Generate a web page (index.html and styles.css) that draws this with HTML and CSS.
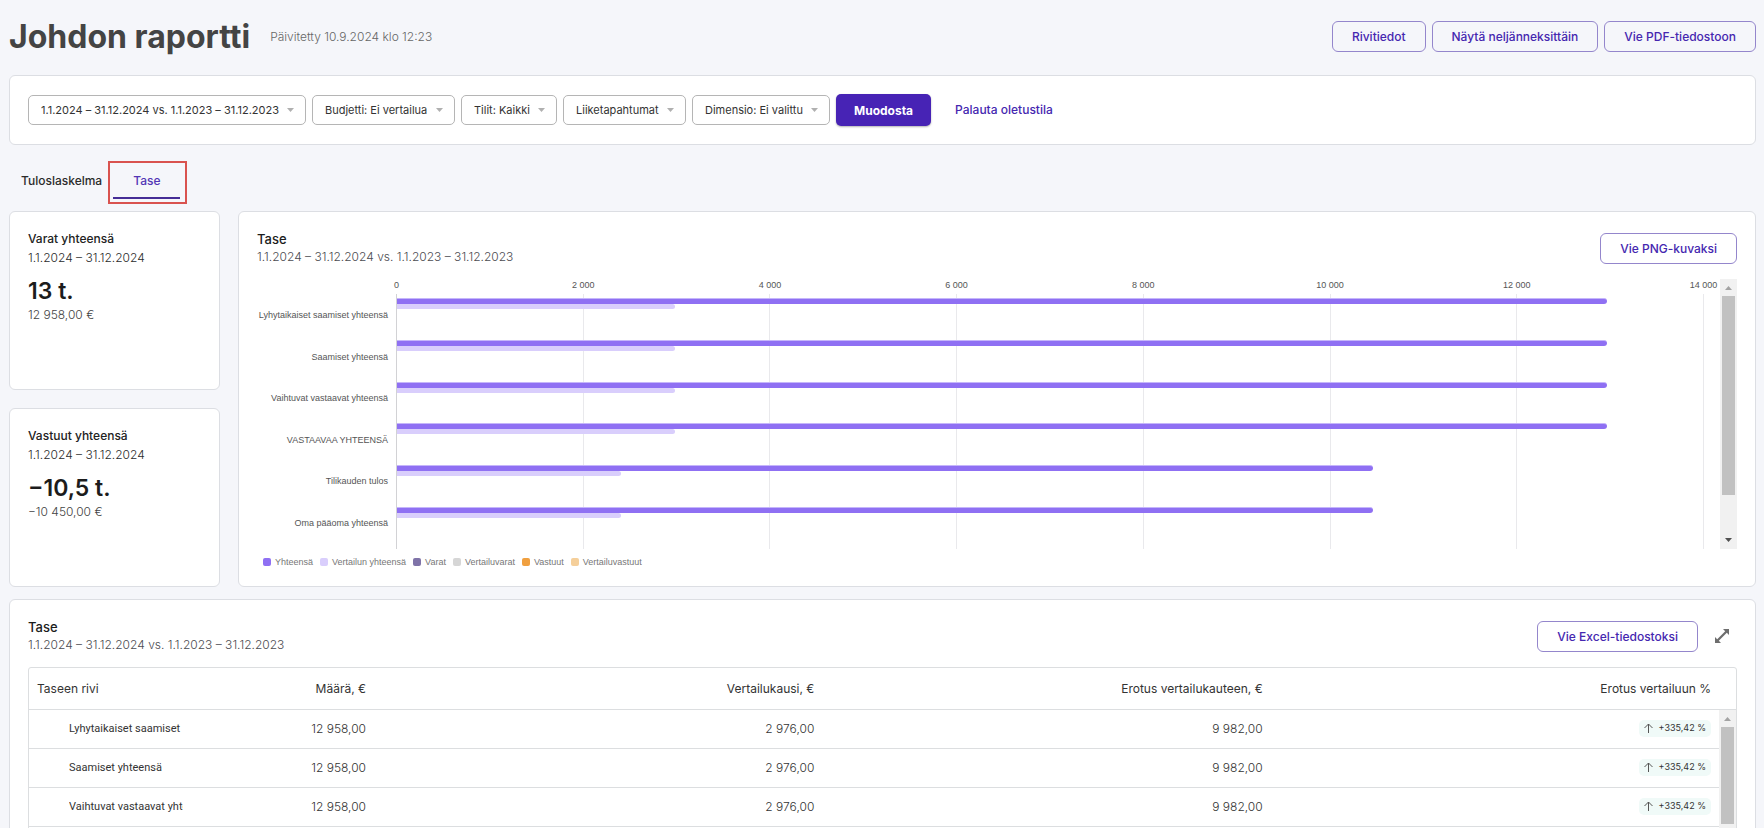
FILE: index.html
```html
<!DOCTYPE html>
<html lang="fi">
<head>
  <meta charset="UTF-8" />
  <title>Johdon raportti</title>
  <link rel="stylesheet" href="styles.css">
</head>
<body>

<header class="page-header">
  <h1>Johdon raportti</h1>
  <span class="updated">Päivitetty 10.9.2024 klo 12:23</span>
  <div class="actions">
    <button class="btn">Rivitiedot</button>
    <button class="btn">Näytä neljänneksittäin</button>
    <button class="btn">Vie PDF-tiedostoon</button>
  </div>
</header>

<form class="card filters" onsubmit="return false">
  <select class="filter" aria-label="Kausi"><option>1.1.2024 – 31.12.2024 vs. 1.1.2023 – 31.12.2023</option></select>
  <select class="filter" aria-label="Budjetti"><option>Budjetti: Ei vertailua</option></select>
  <select class="filter" aria-label="Tilit"><option>Tilit: Kaikki</option></select>
  <select class="filter" aria-label="Liiketapahtumat"><option>Liiketapahtumat</option></select>
  <select class="filter" aria-label="Dimensio"><option>Dimensio: Ei valittu</option></select>
  <button class="btn-primary">Muodosta</button>
  <a class="reset" href="#">Palauta oletustila</a>
</form>

<nav class="tabs">
  <a class="tab" href="#">Tuloslaskelma</a>
  <div class="marked"><a class="tab active" href="#">Tase</a></div>
</nav>

<div class="overview">
  <div class="summaries">
    <section class="card summary">
      <h3>Varat yhteensä</h3>
      <p class="period">1.1.2024 – 31.12.2024</p>
      <p class="amount">13 t.</p>
      <p class="exact">12 958,00 €</p>
    </section>
    <section class="card summary">
      <h3>Vastuut yhteensä</h3>
      <p class="period">1.1.2024 – 31.12.2024</p>
      <p class="amount">−10,5 t.</p>
      <p class="exact">−10 450,00 €</p>
    </section>
  </div>

  <section class="card chart-card">
    <div class="card-head">
      <div>
        <h2>Tase</h2>
        <p class="subtitle">1.1.2024 – 31.12.2024 vs. 1.1.2023 – 31.12.2023</p>
      </div>
      <button class="btn">Vie PNG-kuvaksi</button>
    </div>
    <div class="chart-wrap">
      <div class="chart">
        <div class="ticks">
          <span>0</span><span>2 000</span><span>4 000</span><span>6 000</span><span>8 000</span><span>10 000</span><span>12 000</span><span>14 000</span>
        </div>
        <div class="labels">
          <span>Lyhytaikaiset saamiset yhteensä</span>
          <span>Saamiset yhteensä</span>
          <span>Vaihtuvat vastaavat yhteensä</span>
          <span>VASTAAVAA YHTEENSÄ</span>
          <span>Tilikauden tulos</span>
          <span>Oma pääoma yhteensä</span>
        </div>
        <div class="gridlines"><i></i><i></i><i></i><i></i><i></i><i></i><i></i><i></i></div>
        <div class="bars">
          <div class="group"><div class="bar" style="width:92.56%"></div><div class="bar light" style="width:21.26%"></div></div>
          <div class="group"><div class="bar" style="width:92.56%"></div><div class="bar light" style="width:21.26%"></div></div>
          <div class="group"><div class="bar" style="width:92.56%"></div><div class="bar light" style="width:21.26%"></div></div>
          <div class="group"><div class="bar" style="width:92.56%"></div><div class="bar light" style="width:21.26%"></div></div>
          <div class="group"><div class="bar" style="width:74.64%"></div><div class="bar light" style="width:17.16%"></div></div>
          <div class="group"><div class="bar" style="width:74.64%"></div><div class="bar light" style="width:17.16%"></div></div>
        </div>
      </div>
      <div class="scrollbar">
        <svg width="17" height="17" viewBox="0 0 17 17"><path d="M5 11h7L8.500 7z" fill="#a3a3a3"/></svg>
        <div class="thumb thumb-chart"></div>
        <svg class="down" width="17" height="17" viewBox="0 0 17 17"><path d="M5 6h7L8.500 10z" fill="#505050"/></svg>
      </div>
    </div>
    <ul class="legend">
      <li class="l-total">Yhteensä</li>
      <li class="l-total-ref">Vertailun yhteensä</li>
      <li class="l-assets">Varat</li>
      <li class="l-assets-ref">Vertailuvarat</li>
      <li class="l-debts">Vastuut</li>
      <li class="l-debts-ref">Vertailuvastuut</li>
    </ul>
  </section>
</div>

<section class="card table-card">
  <div class="card-head">
    <div>
      <h2>Tase</h2>
      <p class="subtitle">1.1.2024 – 31.12.2024 vs. 1.1.2023 – 31.12.2023</p>
    </div>
    <div class="table-actions">
      <button class="btn">Vie Excel-tiedostoksi</button>
      <button class="icon-btn" aria-label="Laajenna">
        <svg width="14" height="14" viewBox="0 0 14 14" fill="#6e6e6e"><path d="M8 0h6v6l-2.200-2.200-8 8L6 14H0V8l2.200 2.200 8-8z"/></svg>
      </button>
    </div>
  </div>
  <div class="table-wrap">
    <table>
      <colgroup><col class="c-name"><col class="c-amount"><col><col><col><col class="c-scroll"></colgroup>
      <thead>
        <tr><th class="name">Taseen rivi</th><th>Määrä, €</th><th>Vertailukausi, €</th><th>Erotus vertailukauteen, €</th><th>Erotus vertailuun %</th><th></th></tr>
      </thead>
      <tbody>
        <tr>
          <td class="row-name"><div>Lyhytaikaiset saamiset</div></td><td>12 958,00</td><td>2 976,00</td><td>9 982,00</td>
          <td><span class="pill"><svg width="9" height="10" viewBox="0 0 9 10"><path d="M4.500 10V1M.5 5l4-4 4 4"/></svg>+335,42 %</span></td>
          <td class="scroll-cell" rowspan="4">
            <div class="scrollbar">
              <svg width="17" height="17" viewBox="0 0 17 17"><path d="M5 11h7L8.500 7z" fill="#a3a3a3"/></svg>
              <div class="thumb thumb-table"></div>
            </div>
          </td>
        </tr>
        <tr>
          <td class="row-name"><div>Saamiset yhteensä</div></td><td>12 958,00</td><td>2 976,00</td><td>9 982,00</td>
          <td><span class="pill"><svg width="9" height="10" viewBox="0 0 9 10"><path d="M4.500 10V1M.5 5l4-4 4 4"/></svg>+335,42 %</span></td>
        </tr>
        <tr>
          <td class="row-name"><div>Vaihtuvat vastaavat yhteensä</div></td><td>12 958,00</td><td>2 976,00</td><td>9 982,00</td>
          <td><span class="pill"><svg width="9" height="10" viewBox="0 0 9 10"><path d="M4.500 10V1M.5 5l4-4 4 4"/></svg>+335,42 %</span></td>
        </tr>
        <tr><td></td><td></td><td></td><td></td><td></td></tr>
      </tbody>
    </table>
  </div>
</section>

</body>
</html>
```
FILE: styles.css
```css
* { box-sizing: border-box; }

body {
  margin: 0;
  padding: 0 8px 0 9px;
  height: 100vh;
  overflow: hidden;
  background: #f5f6fa;
  color: #2b2b2b;
  font-family: Inter, sans-serif;
  font-size: 12px;
  line-height: 18px;
}

h1, h2, h3, p, ul {
  margin: 0;
  padding: 0;
}

a { text-decoration: none; }

.card {
  background: #fff;
  border: 1px solid #dcdee3;
  border-radius: 6px;
}

/* header */
.page-header {
  display: flex;
  align-items: center;
  height: 75px;
  padding-bottom: 2px;
}

h1 {
  color: #444;
  font-size: 32px;
  line-height: 40px;
}

.updated {
  margin-left: 20px;
  color: #666;
  font-weight: 300;
}

.actions {
  display: flex;
  gap: 6px;
  margin-left: auto;
}

.btn {
  height: 31px;
  padding: 0 19px;
  border: 1px solid #9486cc;
  border-radius: 6px;
  background: transparent;
  color: #4527b0;
  font: 500 12px Inter, sans-serif;
}

/* filters */
.filters {
  display: flex;
  align-items: center;
  gap: 6px;
  height: 70px;
  padding: 0 18px;
}

.filter {
  appearance: none;
  height: 30px;
  padding: 0 26px 0 12px;
  border: 1px solid #b5b5b5;
  border-radius: 5px;
  background: #fff url("data:image/svg+xml,%3Csvg xmlns='http://www.w3.org/2000/svg' width='7' height='4'%3E%3Cpath d='M0 0h7L3.500 4z' fill='%23b0b0b0'/%3E%3C/svg%3E") no-repeat right 11px center;
  color: #333;
  font: 11px Inter, sans-serif;
}

.btn-primary {
  height: 32px;
  padding: 0 18px;
  border: 0;
  border-radius: 5px;
  background: #4723b5;
  box-shadow: 0 1px 2px rgba(0, 0, 0, 0.3);
  color: #fff;
  font: bold 12px Inter, sans-serif;
}

.reset {
  margin-left: 18px;
  color: #4527b0;
  font-weight: 500;
}

/* tabs */
.tabs {
  display: flex;
  align-items: center;
  gap: 6px;
  height: 66px;
  padding: 8px 0 0 12px;
}

.tab {
  color: #2b2b2b;
  font-weight: 500;
}

.tabs > .tab { padding-bottom: 2px; }

.marked {
  height: 43px;
  padding: 3px 5px 0 3px;
  border: 2px solid #d9534f;
}

.tab.active {
  display: block;
  height: 33px;
  padding: 6px 20px 0;
  border-bottom: 2px solid #452d96;
  color: #5336b5;
}

/* overview */
.overview {
  display: flex;
  gap: 18px;
  margin-bottom: 12px;
}

.summaries {
  display: flex;
  flex-direction: column;
  gap: 18px;
  width: 211px;
}

.summary {
  flex: 1;
  padding: 18px;
}

h3 {
  color: #222;
  font-size: 12px;
  font-weight: 500;
}

.period {
  margin-top: 1px;
  font-weight: 300;
}

.amount {
  margin-top: 10px;
  color: #1c1c1c;
  font-size: 23px;
  font-weight: 600;
  line-height: 28px;
}

.exact {
  margin-top: 1px;
  color: #444;
  font-weight: 300;
}

.chart-card {
  flex: 1;
  padding: 18px;
}

.card-head {
  display: flex;
  justify-content: space-between;
  height: 49px;
}

.card-head .btn { margin-top: 3px; }

h2 {
  color: #1c1c1c;
  font-size: 13px;
  font-weight: 500;
  line-height: 18px;
}

.subtitle {
  color: #4c4c51;
  font-weight: 300;
}

.chart-wrap {
  display: flex;
  height: 270px;
}

.chart {
  display: grid;
  flex: 1;
  grid-template-columns: 139px 1fr;
  grid-template-rows: 15px 1fr;
  padding-right: 16px;
  color: #555;
  font: 9px/12px "Liberation Sans", sans-serif;
}

.ticks {
  display: flex;
  grid-area: 1 / 2;
  justify-content: space-between;
}

.ticks span {
  display: flex;
  justify-content: center;
  width: 1px;
  white-space: nowrap;
}

.labels {
  display: flex;
  flex-direction: column;
  grid-area: 2 / 1;
  justify-content: space-between;
  padding: 15px 8px 20px 0;
  text-align: right;
  white-space: nowrap;
}

.gridlines {
  display: flex;
  grid-area: 2 / 2;
  justify-content: space-between;
}

.gridlines i {
  width: 1px;
  background: #e9e9ec;
}

.gridlines i:first-child { background: #d2d2d5; }

.bars {
  display: flex;
  flex-direction: column;
  grid-area: 2 / 2;
  justify-content: space-between;
  padding: 4px 0 31px 1px;
}

.bar {
  height: 6px;
  border-top: 1px solid #c5b6fa;
  border-radius: 0 3px 3px 0;
  background: #8f70f3;
}

.bar.light {
  height: 5px;
  border: 0;
  background: #d9cefc;
}

.scrollbar {
  display: flex;
  flex-direction: column;
  width: 17px;
  background: #f1f1f1;
}

.scrollbar svg { flex: none; }

.scrollbar .down { margin-top: auto; }

.thumb {
  margin: 0 2px;
  background: #c1c1c1;
}

.thumb-chart { height: 199px; }
.thumb-table { height: 97px; }

.legend {
  display: flex;
  gap: 7px;
  margin-top: 7px;
  padding-left: 6px;
  color: #777;
  font: 9px/12px "Liberation Sans", sans-serif;
  list-style: none;
}

.legend li {
  display: flex;
  align-items: center;
  gap: 4px;
}

.legend li::before {
  content: '';
  width: 8px;
  height: 8px;
  border-radius: 2px;
}

.l-total::before { background: #8f70f3; }
.l-total-ref::before { background: #d9cefc; }
.l-assets::before { background: #7f73a8; }
.l-assets-ref::before { background: #d6d6d6; }
.l-debts::before { background: #f0a040; }
.l-debts-ref::before { background: #f5cf9a; }

/* table */
.table-card { padding: 18px; }

.table-actions {
  display: flex;
  align-items: flex-start;
  gap: 17px;
  padding-right: 8px;
}

.table-card .btn { margin-top: 3px; }

.icon-btn {
  height: 14px;
  margin-top: 11px;
  padding: 0;
  border: 0;
  background: none;
}

.icon-btn svg { display: block; }

.table-wrap {
  border: 1px solid #dcdee0;
  border-radius: 3px;
}

table {
  width: 100%;
  border-collapse: separate;
  border-spacing: 0;
  table-layout: fixed;
}

.c-name { width: 159px; }
.c-amount { width: 186px; }
.c-scroll { width: 17px; }

th, td {
  height: 39px;
  padding: 0 8px;
  border-bottom: 1px solid #dcdee0;
  text-align: right;
  white-space: nowrap;
}

th {
  height: 42px;
  color: #333;
  font-weight: 400;
}

th.name { text-align: left; }

td {
  color: #333;
  font-weight: 300;
}

td.row-name {
  padding-right: 5px;
  font: 11px/18px Roboto, sans-serif;
  text-align: left;
}

.row-name div {
  margin-left: 32px;
  overflow: hidden;
}

td.scroll-cell {
  padding: 0;
  border: 0;
}

.scroll-cell .scrollbar { height: 156px; }

.pill {
  display: inline-flex;
  align-items: center;
  gap: 6px;
  height: 17px;
  padding: 0 5px;
  border-radius: 5px;
  background: #f0faf8;
  color: #333;
  font-size: 9px;
  font-weight: 400;
}

.pill svg {
  fill: none;
  stroke: #555;
}
```
